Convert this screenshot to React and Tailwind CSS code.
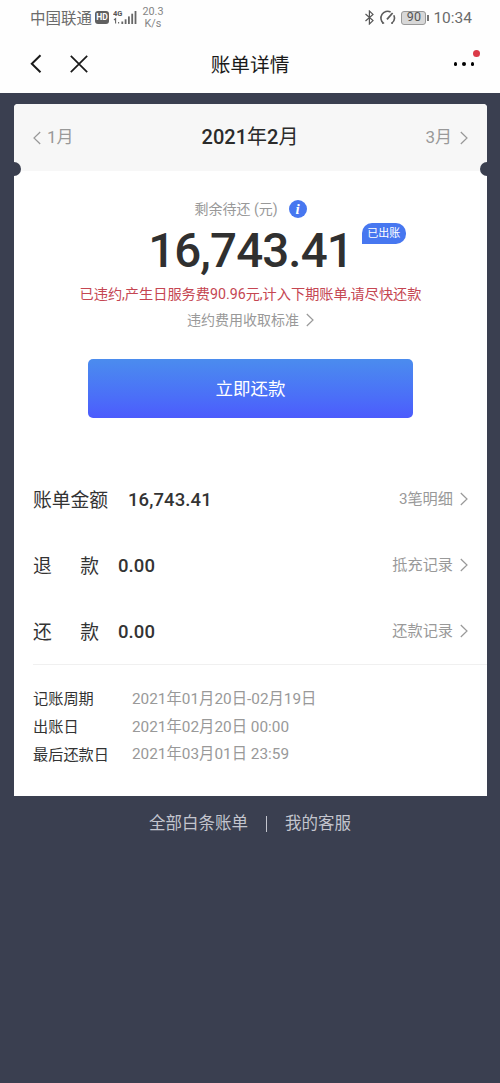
import clsx from 'clsx';

const rows = [
  { label: ['账单金额'], value: '16,743.41', link: '3笔明细' },
  { label: ['退', '款'], value: '0.00', link: '抵充记录' },
  { label: ['还', '款'], value: '0.00', link: '还款记录' },
];

const dates = [
  { label: '记账周期', value: '2021年01月20日-02月19日' },
  { label: '出账日', value: '2021年02月20日 00:00' },
  { label: '最后还款日', value: '2021年03月01日 23:59' },
];

function Chevron({ left }) {
  return (
    <svg className={clsx('h-3.5 w-2 shrink-0', left && 'rotate-180')} viewBox="0 0 8 14" fill="none" stroke="#999" strokeWidth="1.2">
      <path d="M0.8 1 L7 7 L0.8 13" />
    </svg>
  );
}

function StatusBar() {
  return (
    <div className="flex h-[35px] items-center justify-between pr-7 pl-[30px] text-[#6b6b6b]">
      <div className="flex items-center">
        <span className="w-[63px] pt-0.5 text-[15.5px] leading-5 whitespace-nowrap">中国联通</span>
        <span className="ml-0.5 flex h-[13px] w-[14px] items-center justify-center rounded-[3px] bg-[#606060] text-[8.5px] leading-none font-bold text-white">HD</span>
        <svg className="ml-1 h-[17px] w-[25px]" viewBox="0 0 25 17">
          <text x="0" y="7" fontSize="7.5" fontWeight="700" fill="#555">4G</text>
          <g stroke="#666" strokeWidth="1.1" fill="none">
            <path d="M2.6 14.5V9.6L1 11M5.6 13v1.5" />
          </g>
          <g fill="#666">
            <rect x="8.4" y="12.5" width="1.8" height="2.5" />
            <rect x="11.7" y="10.3" width="1.8" height="4.7" />
            <rect x="15" y="7.4" width="1.8" height="7.6" />
            <rect x="18.3" y="4.7" width="1.8" height="10.3" />
            <rect x="21.6" y="2" width="1.8" height="13" />
          </g>
        </svg>
        <div className="ml-1 flex w-[22px] flex-col items-center pt-px text-[10.8px] leading-[12px] text-[#858585]">
          <span>20.3</span>
          <span>K/s</span>
        </div>
      </div>
      <div className="flex items-center">
        <svg className="h-[15px] w-[9px]" viewBox="0 0 9 15" fill="none" stroke="#555" strokeWidth="1.2">
          <path d="M0.5 4 L8 10.6 L4.4 14 V1 L8 4.4 L0.5 11" />
        </svg>
        <svg className="ml-[5px] h-[15px] w-[17px]" viewBox="0 0 17 15" fill="none" stroke="#5c5c5c" strokeWidth="1.6">
          <path d="M4.4 13.2 A6.7 6.7 0 0 1 11.6 2" />
          <path d="M14.8 5.2 A6.7 6.7 0 0 1 12.8 13.2" />
          <path d="M3 13.2 H5.2 M12 13.2 H14" strokeWidth="1.3" />
          <path d="M8 9.4 L13.6 3" strokeWidth="1.8" />
        </svg>
        <span className="ml-[5px] flex h-[14px] w-[25px] items-center justify-center rounded-[3px] border border-[#999] bg-[#d8d8d8] text-[12.5px] leading-none text-[#555]">90</span>
        <span className="ml-px h-[6px] w-[2px] bg-[#777]" />
        <span className="ml-[4px] text-[15.5px] leading-5">10:34</span>
      </div>
    </div>
  );
}

function NavBar() {
  return (
    <div className="flex h-[58px] items-center pr-6 pl-[30px] text-[#1a1a1a]">
      <div className="flex w-[120px] items-center gap-[28px]">
        <svg className="h-5 w-3" viewBox="0 0 12 20" fill="none" stroke="currentColor" strokeWidth="2">
          <path d="M10.5 1.2 L1.8 9.7 L10.5 18.2" />
        </svg>
        <svg className="h-[18px] w-[18px]" viewBox="0 0 18 18" fill="none" stroke="currentColor" strokeWidth="1.7">
          <path d="M0.8 0.8 L17.2 17.2 M17.2 0.8 L0.8 17.2" />
        </svg>
      </div>
      <h1 className="flex-1 pt-[3px] text-center text-[19.7px] leading-6">账单详情</h1>
      <div className="relative flex w-[126px] justify-end gap-[5px] pr-0.5">
        <span className="size-[3.5px] rounded-full bg-black" />
        <span className="size-[3.5px] rounded-full bg-black" />
        <span className="size-[3.5px] rounded-full bg-black" />
        <span className="absolute -top-[12px] -right-[4px] size-[7px] rounded-full bg-[#db3a48]" />
      </div>
    </div>
  );
}

function MonthBar() {
  return (
    <div className="relative flex h-[67px] items-center justify-between bg-[#f7f7f7] px-[19px] text-[17px] text-[#999]">
      <span className="flex items-center gap-[6px]">
        <Chevron left />
        1月
      </span>
      <span className="pb-0.5 pl-px text-[20px] text-[#2b2b2b]">
        <b className="font-medium">2021</b>年<b className="font-medium">2</b>月
      </span>
      <span className="flex items-center gap-[8px]">
        3月
        <Chevron />
      </span>
      <span className="absolute -bottom-[5px] -left-[7px] size-[14px] rounded-full bg-[#3a3f4f]" />
      <span className="absolute -right-[7px] -bottom-[5px] size-[14px] rounded-full bg-[#3a3f4f]" />
    </div>
  );
}

export default function App() {
  return (
    <div className="flex min-h-[1083px] w-[500px] flex-col bg-[#3a3f50] font-['Roboto','Noto_Sans_CJK_SC',sans-serif]">
      <header className="bg-[#fefefe]">
        <StatusBar />
        <NavBar />
      </header>

      <main className="mt-[11px] mr-[13px] ml-[14px] h-[692px] overflow-hidden rounded-t-[4px] bg-white">
        <MonthBar />

        <section className="flex flex-col items-center">
          <div className="mt-7 flex h-5 items-center gap-[11px] text-[14px] text-[#999]">
            <span>剩余待还 (元)</span>
            <span className="flex size-[18px] items-center justify-center rounded-full bg-[#4777f0] font-['Liberation_Serif',serif] text-[15px] leading-none font-bold text-white italic">i</span>
          </div>

          <div className="relative h-[62px] text-[47.5px] leading-[64px] font-medium tracking-[-0.9px] text-[#303030]">
            16,743.41
            <span className="absolute top-[4px] -right-[53px] flex h-[21px] w-[44px] items-center justify-center rounded-t-[10px] rounded-br-[10px] bg-[#4777f0] text-[11px] leading-none font-normal tracking-normal whitespace-nowrap text-white">已出账</span>
          </div>

          <p className="h-[26px] text-[14.2px] leading-[26px] whitespace-nowrap text-[#c54652]">已违约,产生日服务费90.96元,计入下期账单,请尽快还款</p>
          <p className="flex h-[26px] items-center gap-[7px] text-[14px] text-[#999]">
            违约费用收取标准
            <Chevron />
          </p>

          <button className="mt-[26px] h-[59px] w-[325px] rounded-[5px] bg-linear-to-b from-[#4b8cee] to-[#4c5bfd] pt-0.5 text-[17.5px] text-white">立即还款</button>
        </section>

        <section className="mt-[48px] ml-[19px] border-b border-[#f0f0f0] pr-[19px]">
          {rows.map((row) => (
            <div key={row.link} className="flex h-[66px] items-center justify-between">
              <div className="flex items-center pt-[4px] text-[#333]">
                <span className={clsx('flex justify-between text-[18.8px]', row.label.length > 1 ? 'w-[66px]' : 'w-[76px]')}>
                  {row.label.map((part) => (
                    <span key={part}>{part}</span>
                  ))}
                </span>
                <span className="ml-[19px] text-[18.5px] font-medium tracking-[0.1px]">{row.value}</span>
              </div>
              <span className="flex items-center gap-[7px] pt-px text-[15.2px] text-[#999]">
                {row.link}
                <Chevron />
              </span>
            </div>
          ))}
        </section>

        <section className="mt-[21px] ml-[19px]">
          {dates.map((item) => (
            <div key={item.label} className="flex h-[27.6px] items-center text-[15.2px]">
              <span className="w-[99px] text-[#333]">{item.label}</span>
              <span className="text-[15.35px] text-[#999]">{item.value}</span>
            </div>
          ))}
        </section>
      </main>

      <footer className="mt-[16px] flex h-6 items-center justify-center text-[16.5px] text-[#c3c5ce]">
        <span>全部白条账单</span>
        <span className="mx-[18px] h-4 w-px bg-[#c3c5ce]" />
        <span>我的客服</span>
      </footer>
    </div>
  );
}
